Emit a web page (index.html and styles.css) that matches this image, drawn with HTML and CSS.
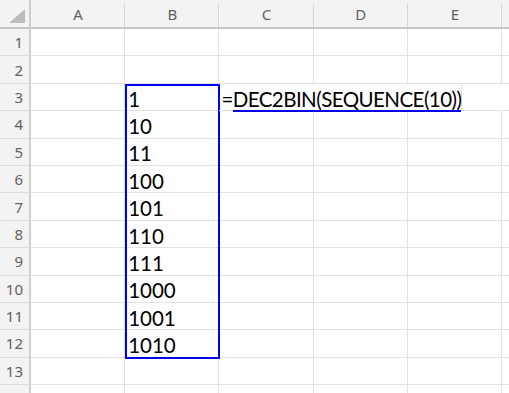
FILE: index.html
```html
<!DOCTYPE html>
<html lang="en">
<head>
    <meta charset="UTF-8">
    <title>Sheet</title>
    <link rel="stylesheet" href="styles.css">
</head>
<body>
    <div class="sheet">
        <div class="row head">
            <div class="rh corner">
                <svg width="16" height="14" viewBox="0 0 16 14"><polygon points="16,0 16,14 0,14" fill="#bcbcbc"/></svg>
            </div>
            <div class="ch">A</div><div class="ch">B</div><div class="ch">C</div><div class="ch">D</div><div class="ch">E</div><div class="ch"></div>
        </div>
        <div class="row"><div class="rh">1</div><div class="c"></div><div class="c"></div><div class="c"></div><div class="c"></div><div class="c"></div><div class="c"></div></div>
        <div class="row"><div class="rh">2</div><div class="c"></div><div class="c"></div><div class="c"></div><div class="c"></div><div class="c"></div><div class="c"></div></div>
        <div class="row"><div class="rh">3</div><div class="c"></div><div class="c">1</div><div class="c formula">=<span class="mark">DEC2BIN(SEQUENCE(10))</span></div><div class="c"></div><div class="c"></div><div class="c"></div></div>
        <div class="row"><div class="rh">4</div><div class="c"></div><div class="c">10</div><div class="c"></div><div class="c"></div><div class="c"></div><div class="c"></div></div>
        <div class="row"><div class="rh">5</div><div class="c"></div><div class="c">11</div><div class="c"></div><div class="c"></div><div class="c"></div><div class="c"></div></div>
        <div class="row"><div class="rh">6</div><div class="c"></div><div class="c">100</div><div class="c"></div><div class="c"></div><div class="c"></div><div class="c"></div></div>
        <div class="row"><div class="rh">7</div><div class="c"></div><div class="c">101</div><div class="c"></div><div class="c"></div><div class="c"></div><div class="c"></div></div>
        <div class="row"><div class="rh">8</div><div class="c"></div><div class="c">110</div><div class="c"></div><div class="c"></div><div class="c"></div><div class="c"></div></div>
        <div class="row"><div class="rh">9</div><div class="c"></div><div class="c">111</div><div class="c"></div><div class="c"></div><div class="c"></div><div class="c"></div></div>
        <div class="row"><div class="rh">10</div><div class="c"></div><div class="c">1000</div><div class="c"></div><div class="c"></div><div class="c"></div><div class="c"></div></div>
        <div class="row"><div class="rh">11</div><div class="c"></div><div class="c">1001</div><div class="c"></div><div class="c"></div><div class="c"></div><div class="c"></div></div>
        <div class="row"><div class="rh">12</div><div class="c"></div><div class="c">1010</div><div class="c"></div><div class="c"></div><div class="c"></div><div class="c"></div></div>
        <div class="row"><div class="rh">13</div><div class="c"></div><div class="c"></div><div class="c"></div><div class="c"></div><div class="c"></div><div class="c"></div></div>
        <div class="row"><div class="rh"></div><div class="c"></div><div class="c"></div><div class="c"></div><div class="c"></div><div class="c"></div><div class="c"></div></div>
        <div class="spill"></div>
    </div>
</body>
</html>
```
FILE: styles.css
```css
body {
    margin: 0;
    background: #ffffff;
    overflow: hidden;
    font-family: "Lato", "Noto Sans", sans-serif;
}
.sheet {
    position: relative;
    width: 509px;
    height: 393px;
    overflow: hidden;
}
.row {
    display: flex;
    height: 27.4px;
}
.row.head {
    height: 29px;
}
.rh {
    flex: 0 0 31px;
    box-sizing: border-box;
    background: #f3f3f3;
    border-right: 2px solid #cfcfcf;
    border-bottom: 1px solid #dcdcdc;
    color: #616161;
    font-family: "Noto Sans", sans-serif;
    font-size: 15px;
    text-align: right;
    padding-right: 6px;
    display: flex;
    align-items: center;
    justify-content: flex-end;
}
.rh.corner {
    border-bottom: 2px solid #c6c6c6;
    align-items: flex-end;
    padding: 0 4px 4px 0;
}
.corner svg {
    display: block;
}
.ch {
    flex: 0 0 94.2px;
    box-sizing: border-box;
    background: #f3f3f3;
    border-bottom: 2px solid #c6c6c6;
    color: #616161;
    font-family: "Noto Sans", sans-serif;
    font-size: 15px;
    display: flex;
    align-items: center;
    justify-content: center;
    position: relative;
}
.ch::after {
    content: "";
    position: absolute;
    right: 0;
    top: 4px;
    bottom: 0;
    width: 1px;
    background: #d6d6d6;
}
.c {
    flex: 0 0 94.2px;
    box-sizing: border-box;
    border-right: 1px solid #e1e1e1;
    border-bottom: 1px solid #e1e1e1;
    font-size: 20.5px;
    color: #000;
    padding: 0 0 1px 3px;
    display: flex;
    align-items: flex-end;
    line-height: 1;
    white-space: nowrap;
}
.formula {
    overflow: visible;
    position: relative;
    z-index: 2;
    padding-left: 2px;
    letter-spacing: -0.55px;
}
.mark {
    border-bottom: 2px solid #0000ee;
    margin-bottom: -3px;
    padding-bottom: 1px;
}
.spill {
    position: absolute;
    left: 125px;
    top: 84px;
    width: 95px;
    height: 275px;
    box-sizing: border-box;
    border: 2px solid #0000ee;
}
```
